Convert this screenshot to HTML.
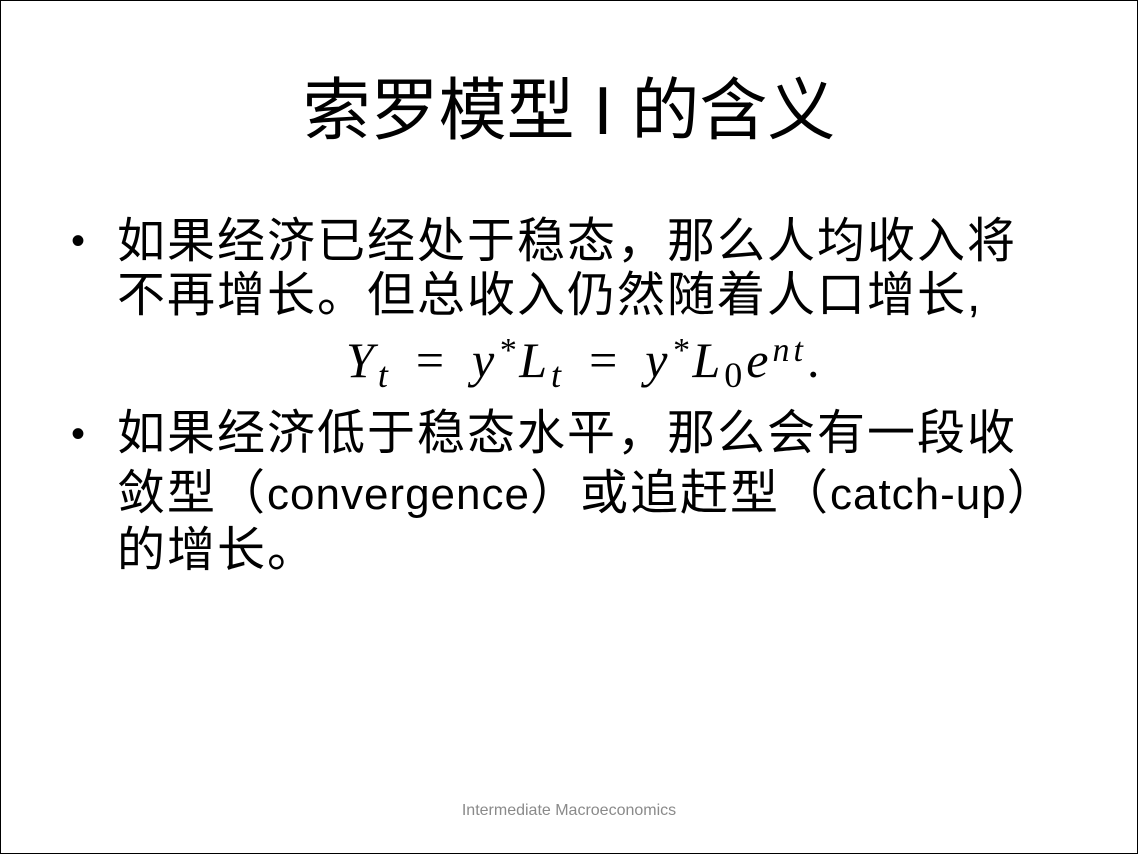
<!DOCTYPE html>
<html><head><meta charset="utf-8"><style>
html,body{margin:0;padding:0;background:#fff;}
.f{position:relative;width:1136px;height:852px;border:1px solid #000;overflow:hidden;font-family:"Liberation Sans","Noto Sans CJK SC",sans-serif;color:#000;}
.t{position:absolute;top:70px;left:0;width:100%;text-align:center;font-size:68px;line-height:80px;}
.l{position:absolute;left:116px;font-size:48px;letter-spacing:2px;white-space:nowrap;line-height:56px;}
.la{font-size:44px;letter-spacing:1px;}
.b{position:absolute;left:70px;font-size:40px;}
.m{position:absolute;top:330px;left:345px;font-family:"Liberation Serif","DejaVu Serif",serif;font-style:italic;font-size:50px;white-space:nowrap;letter-spacing:4px;}
.m sub{font-size:36px;vertical-align:-10px;}
.m sup{font-size:34px;vertical-align:16px;}
.m .e{font-style:normal;margin:0 24px;}
.ft{position:absolute;top:801px;left:0;width:100%;text-align:center;font-size:16px;color:#8a8a8a;}
</style></head><body><div class="f">
<div class="t">索罗模型 I 的含义</div>
<div class="b" style="top:218px">•</div>
<div class="l" style="top:213px">如果经济已经处于稳态，那么人均收入将</div>
<div class="l" style="top:267px">不再增长。但总收入仍然随着人口增长,</div>
<div class="m">Y<sub>t</sub><span class="e">=</span>y<sup>*</sup>L<sub>t</sub><span class="e">=</span>y<sup>*</sup>L<sub style="font-style:normal">0</sub>e<sup>nt</sup><span style="font-style:normal">.</span></div>
<div class="b" style="top:411px">•</div>
<div class="l" style="top:405px">如果经济低于稳态水平，那么会有一段收</div>
<div class="l" style="top:465px">敛型（<span class="la">convergence</span>）或追赶型（<span class="la">catch-up</span>）</div>
<div class="l" style="top:522px">的增长。</div>
<div class="ft">Intermediate Macroeconomics</div>
</div></body></html>
